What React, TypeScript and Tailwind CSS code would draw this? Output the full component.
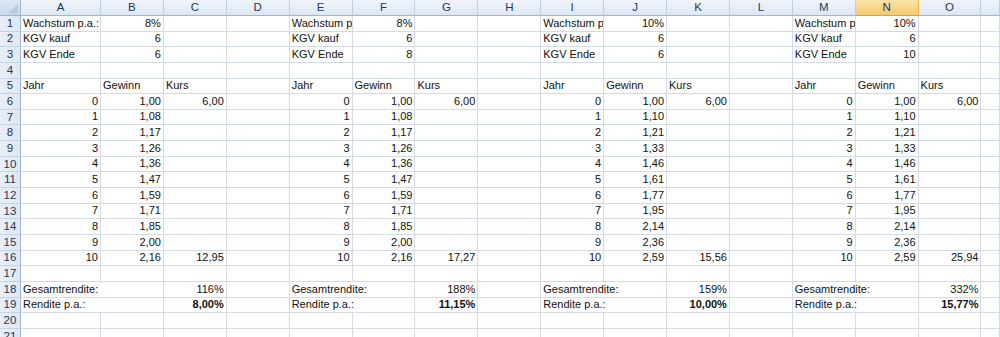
import React from 'react';

type Cell = { v: string; right?: boolean; bold?: boolean; span?: number };

const COLS = ['A', 'B', 'C', 'D', 'E', 'F', 'G', 'H', 'I', 'J', 'K', 'L', 'M', 'N', 'O', 'P'];
const ROWS = 21;

const blocks = [
  { col: 0, wachs: '8%', kauf: '6', ende: '6', label: 'Wachstum p.a.:', gewinn: ['1,00', '1,08', '1,17', '1,26', '1,36', '1,47', '1,59', '1,71', '1,85', '2,00', '2,16'], end: '12,95', total: '116%', pa: '8,00%' },
  { col: 4, wachs: '8%', kauf: '6', ende: '8', label: 'Wachstum p', gewinn: ['1,00', '1,08', '1,17', '1,26', '1,36', '1,47', '1,59', '1,71', '1,85', '2,00', '2,16'], end: '17,27', total: '188%', pa: '11,15%' },
  { col: 8, wachs: '10%', kauf: '6', ende: '6', label: 'Wachstum p', gewinn: ['1,00', '1,10', '1,21', '1,33', '1,46', '1,61', '1,77', '1,95', '2,14', '2,36', '2,59'], end: '15,56', total: '159%', pa: '10,00%' },
  { col: 12, wachs: '10%', kauf: '6', ende: '10', label: 'Wachstum p', gewinn: ['1,00', '1,10', '1,21', '1,33', '1,46', '1,61', '1,77', '1,95', '2,14', '2,36', '2,59'], end: '25,94', total: '332%', pa: '15,77%' },
];

// build the sheet: key "row,col"
const cells: Record<string, Cell> = {};
blocks.forEach((b) => {
  const c = b.col;
  cells[`1,${c}`] = { v: b.label };
  cells[`1,${c + 1}`] = { v: b.wachs, right: true };
  cells[`2,${c}`] = { v: 'KGV kauf' };
  cells[`2,${c + 1}`] = { v: b.kauf, right: true };
  cells[`3,${c}`] = { v: 'KGV Ende' };
  cells[`3,${c + 1}`] = { v: b.ende, right: true };
  cells[`5,${c}`] = { v: 'Jahr' };
  cells[`5,${c + 1}`] = { v: 'Gewinn' };
  cells[`5,${c + 2}`] = { v: 'Kurs' };
  b.gewinn.forEach((g, i) => {
    cells[`${6 + i},${c}`] = { v: String(i), right: true };
    cells[`${6 + i},${c + 1}`] = { v: g, right: true };
  });
  cells[`6,${c + 2}`] = { v: '6,00', right: true };
  cells[`16,${c + 2}`] = { v: b.end, right: true };
  cells[`18,${c}`] = { v: 'Gesamtrendite:', span: 2 };
  cells[`18,${c + 2}`] = { v: b.total, right: true };
  cells[`19,${c}`] = { v: 'Rendite p.a.:', span: 2 };
  cells[`19,${c + 2}`] = { v: b.pa, right: true, bold: true };
});

const App = () => {
  const body: React.ReactNode[] = [];
  for (let r = 1; r <= ROWS; r++) {
    body.push(
      <div
        key={`h${r}`}
        className="flex items-center justify-center border-r border-b border-r-[#9eb6ce] border-b-[#c5d3e3] bg-gradient-to-r from-[#e9eff8] to-[#dfe7f3] text-[11.5px] text-[#1e395b]"
      >
        {r}
      </div>
    );
    for (let c = 0; c < COLS.length; c++) {
      const cell = cells[`${r},${c}`];
      if (cell?.span) {
        body.push(
          <div
            key={`${r}-${c}`}
            className="col-span-2 flex items-end whitespace-nowrap border-r border-b border-[#d4dbe8] px-[2px] pb-[1px]"
          >
            {cell.v}
          </div>
        );
        c += cell.span - 1;
        continue;
      }
      body.push(
        <div
          key={`${r}-${c}`}
          className={`flex items-end overflow-hidden whitespace-nowrap border-r border-b border-[#d4dbe8] px-[2px] pb-[1px] ${
            cell?.right ? 'justify-end' : 'justify-start'
          } ${cell?.bold ? 'font-bold' : ''}`}
        >
          {cell?.v}
        </div>
      );
    }
  }

  return (
    <div className="h-[337px] w-[1000px] overflow-hidden bg-white font-['Liberation_Sans',Arial,sans-serif] text-[11px] leading-[13px] text-[#111]">
      <div className="grid grid-cols-[21px_80px_repeat(14,62.9px)_1fr] grid-rows-[16px_repeat(21,15.65px)]">
        {/* corner */}
        <div className="relative border-r border-b border-[#9eb6ce] bg-gradient-to-b from-[#dde7f4] to-[#c9d8ec]">
          <div className="absolute right-[2px] bottom-[2px] h-0 w-0 border-t-[9px] border-r-[9px] border-b-0 border-t-transparent border-r-[#b6c8df]" />
        </div>
        {COLS.map((c) => (
          <div
            key={c}
            className={`flex items-center justify-center border-r border-b text-[11.5px] ${
              c === 'N'
                ? 'border-r-[#f2b652] border-b-[#e3a33c] bg-gradient-to-b from-[#fbe3a9] to-[#f5c86b] text-[#1e395b]'
                : 'border-r-[#c2d2e4] border-b-[#9eb6ce] bg-gradient-to-b from-[#f1f5fb] to-[#dde7f4] text-[#1e395b]'
            }`}
          >
            {/* column P is scrolled mostly out of view, its letter is not shown */}
            {c === 'P' ? '' : c}
          </div>
        ))}
        {body}
      </div>
    </div>
  );
};

export default App;
